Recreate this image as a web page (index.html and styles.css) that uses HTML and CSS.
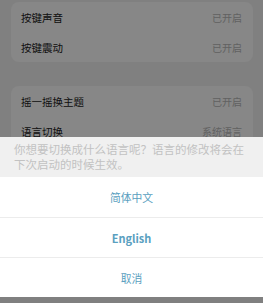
FILE: index.html
```html
<!DOCTYPE html>
<html lang="zh-CN">
<head>
    <meta charset="UTF-8">
    <meta name="viewport" content="width=device-width, initial-scale=1.0">
    <title>设置</title>
    <link rel="stylesheet" href="styles.css">
</head>
<body>
    <div class="page">
        <div class="card">
            <div class="row"><span>按键声音</span><span class="value">已开启</span></div>
            <div class="row"><span>按键震动</span><span class="value">已开启</span></div>
        </div>
        <div class="card">
            <div class="row"><span>摇一摇换主题</span><span class="value">已开启</span></div>
            <div class="row"><span>语言切换</span><span class="value">系统语言</span></div>
        </div>
    </div>

    <div class="mask"></div>

    <div class="sheet">
        <div class="sheet-title">你想要切换成什么语言呢？语言的修改将会在下次启动的时候生效。</div>
        <button class="option">简体中文</button>
        <button class="option bold">English</button>
        <button class="option">取消</button>
    </div>
</body>
</html>
```

FILE: styles.css
```css
body {
    margin: 0;
    background-color: #f2f2f2;
    font-family: "Noto Sans CJK SC", "Noto Sans", sans-serif;
    color: #222222;
    width: 263px;
    height: 303px;
    overflow: hidden;
}
.page {
    padding: 2px 10px 0 11px;
    display: flex;
    flex-direction: column;
    gap: 24px;
}
.card {
    background-color: #ffffff;
    border-radius: 8px;
    padding: 0 11px 0 10px;
}
.row {
    height: 30px;
    display: flex;
    align-items: center;
    justify-content: space-between;
    font-size: 10.5px;
}
.value {
    color: #b8b8b8;
    font-size: 10px;
}
.mask {
    position: fixed;
    inset: 0;
    background-color: rgba(0, 0, 0, 0.47);
}
.sheet {
    position: fixed;
    left: 0;
    right: 0;
    bottom: 6px;
    display: flex;
    flex-direction: column;
}
.sheet-title {
    background-color: #f0f0f0;
    color: #c2c2c2;
    font-size: 11.5px;
    line-height: 15px;
    padding: 5px 12px 5px 14px;
}
.option {
    height: 40px;
    border: none;
    border-top: 1px solid #ececec;
    background-color: #ffffff;
    color: #5aa0c0;
    font-family: "Noto Sans CJK SC", "Noto Sans", sans-serif;
    font-size: 10.8px;
    padding: 0;
}
.option:first-of-type {
    border-top: none;
}
.option.bold {
    font-weight: bold;
    font-size: 11px;
}
```
